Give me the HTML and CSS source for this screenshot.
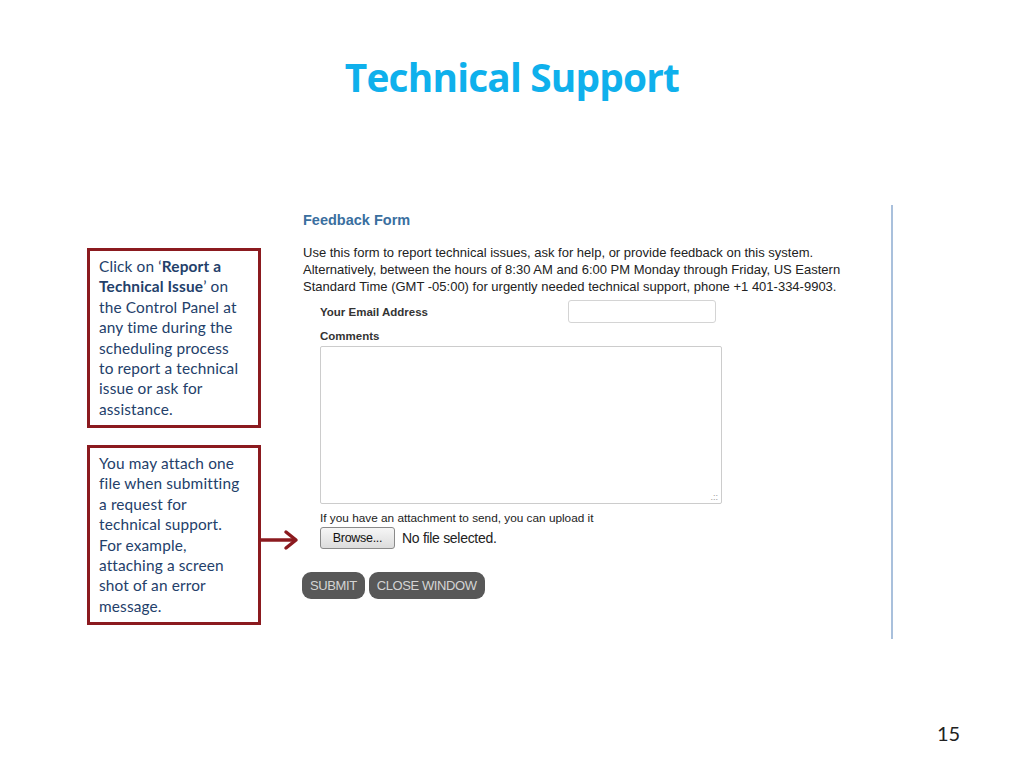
FILE: index.html
```html
<!DOCTYPE html>
<html>
<head>
<meta charset="utf-8">
<link rel="stylesheet" href="styles.css">
</head>
<body>
<div class="slide">
  <h1 class="title">Technical Support</h1>
  <div class="main">
    <div class="notes">
      <div class="note">Click on ‘<b>Report a<br>Technical Issue</b>’ on<br>the Control Panel at<br>any time during the<br>scheduling process<br>to report a technical<br>issue or ask for<br>assistance.</div>
      <div class="note-row">
        <div class="note">You may attach one<br>file when submitting<br>a request for<br>technical support.<br>For example,<br>attaching a screen<br>shot of an error<br>message.</div>
        <svg class="arrow" width="40" height="24" viewBox="0 0 40 24">
          <path d="M0 12 H34" stroke="#8b1a1f" stroke-width="3.5" fill="none"/>
          <path d="M25 4 L35 12 L25 20" stroke="#8b1a1f" stroke-width="3.5" fill="none" stroke-linecap="round" stroke-linejoin="round"/>
        </svg>
      </div>
    </div>
    <div class="panel">
      <h2 class="form-title">Feedback Form</h2>
      <p class="intro">Use this form to report technical issues, ask for help, or provide feedback on this system.<br>Alternatively, between the hours of 8:30 AM and 6:00 PM Monday through Friday, US Eastern<br>Standard Time (GMT -05:00) for urgently needed technical support, phone +1 401-334-9903.</p>
      <div class="fields">
        <div class="email-row">
          <span class="label">Your Email Address</span>
          <span class="input"></span>
        </div>
        <div class="label comments">Comments</div>
        <div class="textarea"><span class="grip">.::</span></div>
        <div class="attach">If you have an attachment to send, you can upload it</div>
        <div class="file-row">
          <span class="browse">Browse...</span>
          <span class="nofile">No file selected.</span>
        </div>
      </div>
      <div class="actions">
        <span class="btn">SUBMIT</span>
        <span class="btn">CLOSE WINDOW</span>
      </div>
    </div>
  </div>
  <div class="page-num">15</div>
</div>
</body>
</html>
```
FILE: styles.css
```css
* { box-sizing: border-box; }
html, body { margin: 0; padding: 0; background: #fff; }
.slide {
  width: 1024px;
  height: 768px;
  position: relative;
  overflow: hidden;
  font-family: Lato, "Open Sans", sans-serif;
}
.title {
  margin: 0;
  padding-top: 53px;
  height: 205px;
  text-align: center;
  font-family: "Open Sans", Lato, sans-serif;
  font-weight: 700;
  font-size: 38.8px;
  line-height: 48px;
  color: #0fb0ec;
  letter-spacing: -0.8px;
}
.main {
  display: flex;
  padding-left: 87px;
}
.notes {
  width: 215px;
  padding-top: 43px;
  display: flex;
  flex-direction: column;
  gap: 17px;
}
.note-row {
  display: flex;
  align-items: center;
}
.note {
  width: 174px;
  height: 180px;
  border: 3px solid #8b1a1f;
  padding: 5px 0 0 9px;
  font-family: Lato, sans-serif;
  font-size: 15.4px;
  line-height: 20.4px;
  letter-spacing: 0.15px;
  color: #23406a;
  white-space: nowrap;
}
.note b { font-weight: 700; }
.arrow {
  display: block;
  margin-top: 10px;
  flex: none;
}
.panel {
  width: 591px;
  height: 434px;
  border-right: 2px solid #a9c0dc;
  font-family: "Liberation Sans", Arial, sans-serif;
  color: #222;
}
.form-title {
  margin: 6px 0 0 1px;
  font-size: 14.5px;
  line-height: 18px;
  font-weight: 700;
  color: #3a6f9f;
}
.intro {
  margin: 15px 0 0 1px;
  font-size: 13px;
  line-height: 17px;
  white-space: nowrap;
}
.fields {
  padding-left: 18px;
}
.email-row {
  display: flex;
  align-items: center;
  margin-top: 5px;
  height: 23px;
}
.label {
  font-weight: 700;
  font-size: 11.5px;
  color: #333;
}
.email-row .label { width: 248px; }
.input {
  display: block;
  width: 148px;
  height: 23px;
  border: 1px solid #d4d4d4;
  border-radius: 3px;
}
.comments {
  margin-top: 5px;
  line-height: 16px;
}
.textarea {
  margin-top: 2px;
  width: 402px;
  height: 158px;
  border: 1px solid #ccc;
  border-radius: 2px;
  position: relative;
}
.grip {
  position: absolute;
  right: 3px;
  bottom: 1px;
  font-size: 9px;
  line-height: 9px;
  color: #999;
}
.attach {
  margin-top: 7px;
  font-size: 11.8px;
  line-height: 15px;
}
.file-row {
  display: flex;
  align-items: center;
  gap: 7px;
  margin-top: 1px;
}
.browse {
  display: inline-block;
  width: 75px;
  height: 22px;
  border: 1px solid #8a8a8a;
  border-radius: 3px;
  background: linear-gradient(#f6f6f6, #dcdcdc);
  font-size: 12.5px;
  line-height: 20px;
  text-align: center;
  color: #111;
  letter-spacing: -0.3px;
}
.nofile {
  font-size: 14px;
  letter-spacing: -0.3px;
}
.actions {
  display: flex;
  gap: 4px;
  margin-top: 23px;
}
.btn {
  display: inline-block;
  height: 27px;
  padding: 0 8px;
  border-radius: 9px;
  background: #585858;
  color: #d4d4d4;
  font-size: 13px;
  line-height: 27px;
  letter-spacing: -0.4px;
}
.page-num {
  position: absolute;
  left: 937px;
  top: 720px;
  font-family: Lato, sans-serif;
  font-size: 20px;
  line-height: 26px;
  color: #222;
}
```
